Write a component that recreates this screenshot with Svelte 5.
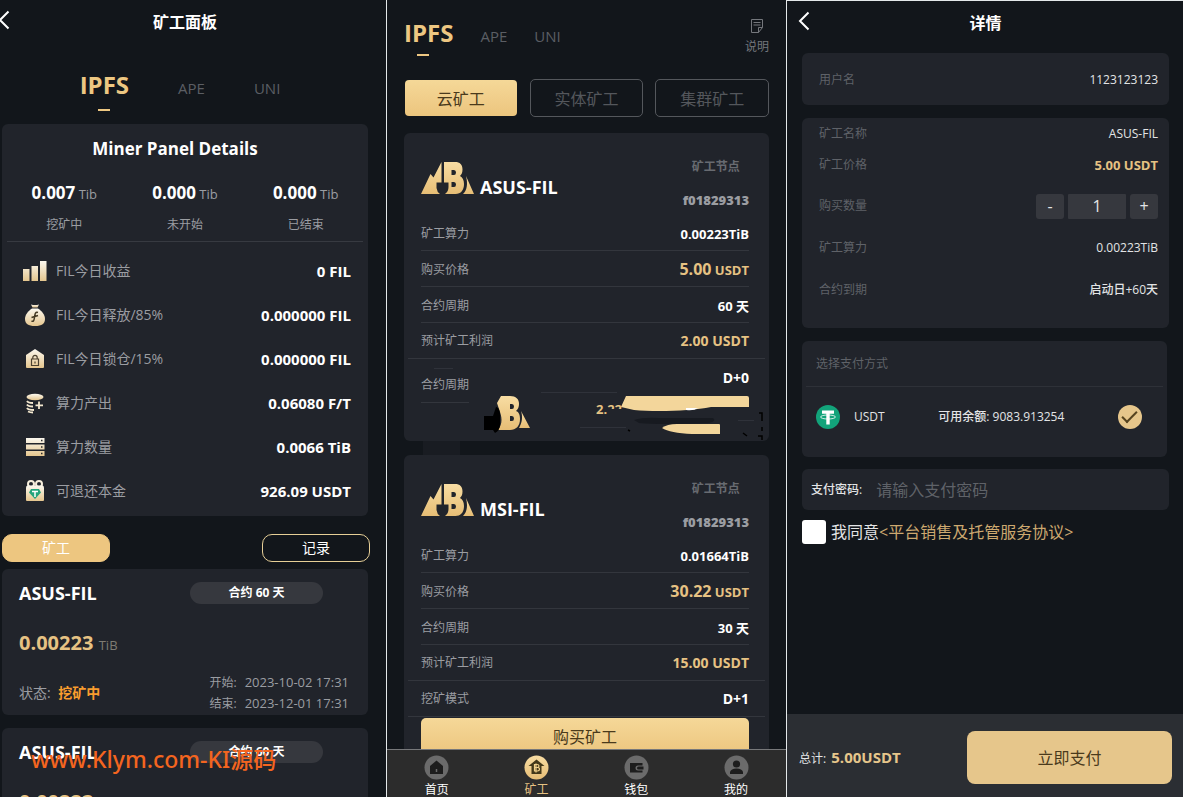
<script>
  /**
   * Miner screens side by side: dashboard, miner shop and order details.
   */

  const tabs = ['IPFS', 'APE', 'UNI'];
  let panelTab = $state('IPFS');
  let shopTab = $state('IPFS');

  const stats = [
    { value: '0.007', label: '挖矿中' },
    { value: '0.000', label: '未开始' },
    { value: '0.000', label: '已结束' },
  ];

  const details = [
    { icon: 'bars', label: 'FIL今日收益', value: '0 FIL' },
    { icon: 'bag', label: 'FIL今日释放/85%', value: '0.000000 FIL' },
    { icon: 'lock', label: 'FIL今日锁仓/15%', value: '0.000000 FIL' },
    { icon: 'coins', label: '算力产出', value: '0.06080 F/T' },
    { icon: 'server', label: '算力数量', value: '0.0066 TiB' },
    { icon: 'gift', label: '可退还本金', value: '926.09 USDT' },
  ];

  const orders = [
    { name: 'ASUS-FIL', days: 60, power: '0.00223', start: '2023-10-02 17:31', end: '2023-12-01 17:31' },
    { name: 'ASUS-FIL', days: 60, power: '0.00223', start: '2023-10-02 17:31', end: '2023-12-01 17:31' },
  ];

  const kinds = ['云矿工', '实体矿工', '集群矿工'];
  let kind = $state('云矿工');

  const miners = [
    { name: 'ASUS-FIL', power: '0.00223TiB', price: '5.00', days: 60, profit: '2.00', mode: 'D+0', sold: true },
    { name: 'MSI-FIL', power: '0.01664TiB', price: '30.22', days: 30, profit: '15.00', mode: 'D+1', sold: false },
  ];

  const nav = ['首页', '矿工', '钱包', '我的'];
  let page = $state('矿工');

  let count = $state(1);
  let password = $state('');
  let agreed = $state(false);
  let total = $derived((count * 5).toFixed(2));
</script>

{#snippet back()}
  <button class="back" type="button" aria-label="返回">
    <svg width="12" height="20" viewBox="0 0 12 20" fill="none" stroke="#fff" stroke-width="2">
      <path d="M10.500 1.500L2 10l8.500 8.500" />
    </svg>
  </button>
{/snippet}

{#snippet logo()}
  <svg class="logo" width="53" height="33" viewBox="0 0 53 33" fill="url(#gold)" aria-hidden="true">
    <path d="M0 32L9.500 12l3 3.500L20.500 0v20.500h-5V26q.5 4 3.500 6z" />
    <path fill-rule="evenodd" d="M23 0h11c5 0 7.500 2.500 7.500 7.500 0 3.500-1 5-2.500 6.500 2.500 1.500 4 4 4 8 0 6-3 10-8.500 10H24c2.500-2 3.500-4 3.500-7v-4.500H23zM30.500 8v5h2.500q2 0 2-2.500t-2-2.500zm0 12v5h2.500q2 0 2-2.500t-2-2.500z" />
    <path d="M45 14l8 18H42c4-4 5-10 3-18z" />
  </svg>
{/snippet}

{#snippet icon(name)}
  <svg class="icon" width="24" height="24" viewBox="0 0 24 24" fill="url(#cream)" aria-hidden="true">
    {#if name === 'bars'}
      <path d="M0 10h6.500v12H0zM8.500 7H15v15H8.500zM17 2h6.500v20H17z" />
    {:else if name === 'bag'}
      <path d="M8 1.500q4 1 8 0L14.500 4.500h-5z" />
      <path d="M9 5.500h6c4 2.500 7 6.500 7 10.500 0 4.500-3 7-10 7S2 20.500 2 16c0-4 3-8 7-10.500z" />
      <path d="M15 9.500c-3-1-3 2-3.500 5s-1 4.500-3 3.500M8.500 14.500l6.500-2" fill="none" stroke="#453a24" stroke-width="1.500" />
    {:else if name === 'lock'}
      <path d="M12 2l9 6v12q0 1-1 1H4q-1 0-1-1V8z" />
      <path d="M8.500 12h7v6.500h-7zM9.800 12v-1.500a2.200 2.200 0 0 1 4.400 0V12M12 14.500v2" fill="none" stroke="#4c4130" stroke-width="1.200" />
    {:else if name === 'coins'}
      <ellipse cx="12" cy="6" rx="8.500" ry="3.200" />
      <path d="M4 10q1 2 6 2M4 13.500q1 2 6 2M4 17q1 2 7 2M5 20.500q2 1 5 1M16 10.500v7.500M12.500 14.300h7.500" fill="none" stroke="#f4e8cf" stroke-width="1.800" />
    {:else if name === 'server'}
      <path d="M3 3h18.500v5H3zM3 9.500h18.500v5H3zM3 16h18.500v5H3z" />
      <path d="M18 5.500h1.500M18 12h1.500M18 18.500h1.500" stroke="#2a2a2a" stroke-width="1.500" />
    {:else}
      <circle cx="8" cy="5" r="3" fill="none" stroke="#f7efdc" stroke-width="2" />
      <circle cx="16" cy="5" r="3" fill="none" stroke="#f7efdc" stroke-width="2" />
      <path d="M5 6.500h14q2 0 2 2V21q0 1-1 1H4q-1 0-1-1V8.500q0-2 2-2z" />
      <path d="M8 10h8l2 3.500-6 6.500-6-6.500z" fill="#24a47b" />
      <path d="M9 12.500h6M12 12.500V18" stroke="#fff" stroke-width="1.500" />
    {/if}
  </svg>
{/snippet}

{#snippet navIcon(name)}
  <svg width="25" height="25" viewBox="0 0 25 25" aria-hidden="true">
    <circle cx="12.500" cy="12.500" r="12" fill={page === name ? 'url(#gold)' : '#6b6b6b'} />
    {#if name === '首页'}
      <path d="M6 11l6.500-5.500L19 11v8H6z" fill="#1d1d1d" />
      <path d="M12.500 14v3" stroke="#6b6b6b" stroke-width="1.500" />
    {:else if name === '矿工'}
      <path d="M12.500 4.500L20.500 11h-3v8h-10v-8h-3z" fill="#433819" />
      <path d="M10.500 9.500h2.500q2 0 2 1.500t-2 1.500h-2.500zM10.500 12.500h3q2 0 2 1.700t-2 1.800h-3zM12 8.500v9" fill="none" stroke="#f2d18b" stroke-width="1.200" />
    {:else if name === '钱包'}
      <path d="M6 8h12.500v2.500H14a2 2 0 0 0 0 5h4.500v2H6zM14.500 11.500h5v3h-5a1.500 1.500 0 0 1 0-3z" fill="#1d1d1d" />
    {:else}
      <circle cx="12.500" cy="9" r="3.600" fill="#1d1d1d" />
      <path d="M6 19v-2q1-3.500 6.500-3.500T19 17v2z" fill="#1d1d1d" />
    {/if}
  </svg>
{/snippet}

<svg class="defs" width="0" height="0" aria-hidden="true">
  <defs>
    <linearGradient id="gold" x1="0" y1="0" x2="0" y2="1">
      <stop offset="0" stop-color="#f8dda3" />
      <stop offset="1" stop-color="#e6bd75" />
    </linearGradient>
    <linearGradient id="cream" x1="0" y1="0" x2="0" y2="1">
      <stop offset="0" stop-color="#fbf8ef" />
      <stop offset="1" stop-color="#e5c68e" />
    </linearGradient>
  </defs>
</svg>

<div class="screens">
  <section class="screen panel">
    <header class="bar">
      {@render back()}
      <h1>矿工面板</h1>
    </header>

    <div class="tabs">
      {#each tabs as tab}
        <button type="button" class:active={panelTab === tab} onclick={() => (panelTab = tab)}>{tab}</button>
      {/each}
    </div>

    <div class="card summary">
      <h2>Miner Panel Details</h2>
      <div class="stats">
        {#each stats as stat}
          <div>
            <p class="stat"><b>{stat.value}</b> Tib</p>
            <p class="stat-label">{stat.label}</p>
          </div>
        {/each}
      </div>
      {#each details as item}
        <div class="detail">
          {@render icon(item.icon)}
          <span>{item.label}</span>
          <b>{item.value}</b>
        </div>
      {/each}
    </div>

    <div class="switch">
      <button class="filled" type="button">矿工</button>
      <button type="button">记录</button>
    </div>

    {#each orders as order}
      <article class="card order">
        <div class="order-head">
          <h3>{order.name}</h3>
          <span class="pill">合约 {order.days} 天</span>
        </div>
        <p class="power"><b>{order.power}</b> TiB</p>
        <div class="order-foot">
          <p class="status">状态: <b>挖矿中</b></p>
          <dl>
            <dt>开始:</dt>
            <dd>{order.start}</dd>
            <dt>结束:</dt>
            <dd>{order.end}</dd>
          </dl>
        </div>
      </article>
    {/each}

    <div class="watermark">www.Klym.com-KI源码</div>
  </section>

  <section class="screen shop">
    <div class="shop-list">
      <header class="shop-head">
        <div class="tabs">
          {#each tabs as tab}
            <button type="button" class:active={shopTab === tab} onclick={() => (shopTab = tab)}>{tab}</button>
          {/each}
        </div>
        <button class="help" type="button">
          <svg width="14" height="14" viewBox="0 0 14 14" fill="none" stroke="currentColor" aria-hidden="true">
            <path d="M1.500.5h11v8l-4 5h-7zM12.500 8.500h-4v5M3.500 3.500h7M3.500 6h7" />
          </svg>
          说明
        </button>
      </header>

      <div class="kinds">
        {#each kinds as item}
          <button type="button" class:active={kind === item} onclick={() => (kind = item)}>{item}</button>
        {/each}
      </div>

      {#each miners as miner}
        <article class="card miner">
          <div class="miner-head">
            {@render logo()}
            <h3>{miner.name}</h3>
            <div class="node">
              <span>矿工节点</span>
              <b>f01829313</b>
            </div>
          </div>
          <div class="line"><span>矿工算力</span><b>{miner.power}</b></div>
          <div class="line"><span>购买价格</span><b class="gold"><big>{miner.price}</big> USDT</b></div>
          <div class="line"><span>合约周期</span><b>{miner.days} 天</b></div>
          <div class="line wide"><span>预计矿工利润</span><b class="gold mid">{miner.profit} USDT</b></div>
          {#if miner.sold}
            <div class="tail">
              <span>合约周期</span>
              <b class="mid">{miner.mode}</b>
            </div>
            <!-- brushed-out footer of the sold card -->
            <svg class="brush" viewBox="0 0 365 96" aria-hidden="true">
              <path d="M19 82h37v14H19z" fill="#191c22" />
              <path d="M30 9.500h19M137 33.500h76M176 68.500h46M334 61.500h16" stroke="#2f323a" />
              <path fill="url(#gold)" fill-rule="evenodd" d="M97 37h9c6 0 9 3 9 8 0 3-1 5-3 7 3 1 4 4 4 8 0 7-4 11-10 11H94c5-7 4-13 1-21l-2-6zM106 45v5h2q2 0 2-2.500t-2-2.500zm0 12v5h2q2 0 2-2.500t-2-2.500z" />
              <path fill="url(#gold)" d="M117 52l9 17h-11c3-5 4-11 2-17z" />
              <path d="M80 57h9l3-9q3 0 4 6v12q0 5-5 8l-2-3h-9z" fill="#000" />
              <text x="192" y="55" class="brush-text">2.22</text>
              <path d="M203 50h17v8h-17z" fill="#21242b" />
              <path d="M222 37h121q2 0 2 2v9h-38c-20 4-55 5-77 3l-13-3z" fill="#f3d69b" />
              <path d="M282 49h12q-4 3-12 2z" fill="#fff" />
              <path d="M230 61q10-3 25-2h54q4 3-4 5-50 2-70 0z" fill="#171a20" />
              <path d="M258 69q5-4 15-4h42q1 0 1 1v9h-28q-22-1-30-6z" fill="#f3d69b" />
              <path d="M355 54h3v8M358 68v4M339 74l4 3M354 77h4v4M224 71l2 1" fill="none" stroke="#000" stroke-width="1.500" />
            </svg>
          {:else}
            <div class="line wide"><span>挖矿模式</span><b class="mid">{miner.mode}</b></div>
            <button class="buy" type="button">购买矿工</button>
          {/if}
        </article>
      {/each}
    </div>

    <nav>
      {#each nav as item}
        <button type="button" class:active={page === item} onclick={() => (page = item)}>
          {@render navIcon(item)}
          {item}
        </button>
      {/each}
    </nav>
  </section>

  <section class="screen checkout">
    <header class="bar">
      {@render back()}
      <h1>详情</h1>
    </header>

    <div class="card user">
      <span>用户名</span>
      <span class="value">1123123123</span>
    </div>

    <div class="card info">
      <div class="row"><span>矿工名称</span><span class="value">ASUS-FIL</span></div>
      <div class="row"><span>矿工价格</span><b class="gold">5.00 USDT</b></div>
      <div class="spaced">
        <div class="row">
          <label for="count">购买数量</label>
          <div class="stepper">
            <button type="button" aria-label="减少" onclick={() => (count = Math.max(1, count - 1))}>-</button>
            <input id="count" type="text" bind:value={count} />
            <button type="button" aria-label="增加" onclick={() => (count = Number(count) + 1)}>+</button>
          </div>
        </div>
        <div class="row"><span>矿工算力</span><span class="value">0.00223TiB</span></div>
        <div class="row"><span>合约到期</span><span class="value">启动日+60天</span></div>
      </div>
    </div>

    <div class="card pay">
      <h2>选择支付方式</h2>
      <label class="method">
        <svg width="24" height="24" viewBox="0 0 24 24" aria-hidden="true">
          <circle cx="12" cy="12" r="12" fill="#12a37a" />
          <path d="M6 5.500h12v3.200h-4.300v10.800h-3.400V8.700H6z" fill="#fff" />
          <ellipse cx="12" cy="12" rx="7.500" ry="2" fill="none" stroke="#fff" stroke-width="0.800" />
        </svg>
        <span>USDT</span>
        <span class="balance">可用余额: 9083.913254</span>
        <input type="radio" name="method" checked />
      </label>
    </div>

    <div class="card secret">
      <label for="password">支付密码:</label>
      <input id="password" type="password" placeholder="请输入支付密码" bind:value={password} />
    </div>

    <div class="agree">
      <input id="agree" type="checkbox" bind:checked={agreed} />
      <label for="agree">我同意</label><a href="#terms">&lt;平台销售及托管服务协议&gt;</a>
    </div>

    <footer>
      <p>总计: <b>{total}USDT</b></p>
      <button type="button">立即支付</button>
    </footer>
  </section>
</div>

<style>
  :global(body) {
    background: #12161b;
    color: #fff;
    font-family: 'Open Sans', 'Noto Sans CJK SC', sans-serif;
    font-size: 12px;
    line-height: 20px;
  }

  h1, h2, h3, p, dl, dd {
    margin: 0;
  }

  button, input {
    margin: 0;
    padding: 0;
    border: none;
    background: none;
    color: inherit;
    font: inherit;
  }

  button {
    cursor: pointer;
  }

  svg {
    display: block;
    flex-shrink: 0;
  }

  .defs {
    position: absolute;
  }

  .screens {
    display: grid;
    grid-template-columns: 386fr 400fr 397fr;
    height: 100vh;
    overflow: hidden;
  }

  .screen {
    position: relative;
    display: flex;
    flex-direction: column;
    min-width: 0;
    min-height: 0;
    box-sizing: border-box;
    overflow: hidden;
  }

  .screen + .screen {
    border-left: 1px solid #e4e8ea;
  }

  .card {
    flex-shrink: 0;
    background: #21242b;
    border-radius: 6px;
  }

  .gold {
    color: #e6c283;
  }

  .bar {
    position: relative;
    flex-shrink: 0;
    height: 44px;
    text-align: center;
  }

  .bar h1 {
    font-size: 16px;
    line-height: 44px;
  }

  .back {
    position: absolute;
    left: 0;
    top: 10px;
  }

  .tabs {
    display: flex;
    align-items: baseline;
    flex-shrink: 0;
  }

  .tabs button {
    display: flex;
    flex-direction: column;
    color: #5b5e64;
    font-size: 15px;
    line-height: 34px;
  }

  .tabs .active {
    color: #edc782;
    font-size: 24px;
    font-weight: 700;
  }

  .tabs .active::after {
    content: '';
    width: 12px;
    height: 2px;
    background: #edc782;
  }

  /* miner panel */
  .panel {
    padding: 0 18px 0 2px;
  }

  .panel .back {
    left: -4px;
  }

  .panel .tabs {
    justify-content: center;
    gap: 49px;
    margin-bottom: 13px;
    padding: 24px 10px 0 0;
  }

  .panel .tabs .active::after {
    margin: 7px 0 0 18px;
  }

  .summary {
    padding: 13px 0 3px;
  }

  .summary h2 {
    padding-right: 20px;
    font-size: 17px;
    line-height: 24px;
    text-align: center;
  }

  .stats {
    display: grid;
    grid-template-columns: repeat(3, 1fr);
    column-gap: 6px;
    margin: 20px 5px 7px;
    padding-bottom: 6px;
    border-bottom: 1px solid #373a41;
    color: #9b9da2;
    text-align: center;
  }

  .stat {
    height: 24px;
    margin-bottom: 10px;
    font-size: 13px;
    line-height: 24px;
  }

  .stat b {
    color: #fff;
    font-size: 17px;
  }

  .detail {
    display: flex;
    align-items: center;
    gap: 9px;
    height: 44px;
    padding: 0 17px 0 21px;
    color: #9b9da2;
    font-size: 14px;
  }

  .detail b {
    margin-left: auto;
    color: #fff;
    font-size: 15px;
  }

  .switch {
    display: flex;
    flex-shrink: 0;
    justify-content: space-between;
    margin: 18px -2px 7px 0;
  }

  .switch button {
    box-sizing: border-box;
    width: 108px;
    height: 28px;
    border: 1px solid #e6cf97;
    border-radius: 10px;
    font-size: 14px;
  }

  .switch .filled {
    border-color: #edc680;
    background: #edc680;
  }

  .order {
    margin-bottom: 13px;
    padding: 12px 19px 1px 17px;
  }

  .order-head {
    display: flex;
    align-items: center;
    justify-content: space-between;
    padding-right: 26px;
  }

  .order h3 {
    font-size: 18px;
    line-height: 24px;
  }

  .pill {
    width: 133px;
    border-radius: 11px;
    background: #36383e;
    font-weight: 700;
    line-height: 22px;
    text-align: center;
  }

  .power {
    height: 28px;
    margin: 24px 0 15px;
    color: #7e7b72;
    font-size: 13px;
    line-height: 28px;
  }

  .power b {
    margin-right: 2px;
    color: #e6c283;
    font-size: 20px;
  }

  .order-foot {
    display: flex;
    align-items: center;
    justify-content: space-between;
    color: #9b9da2;
  }

  .status {
    font-size: 14px;
  }

  .status b {
    margin-left: 4px;
    color: #f99d2e;
  }

  dl {
    display: grid;
    grid-template-columns: auto auto;
    column-gap: 8px;
    line-height: 21px;
  }

  dd {
    font-size: 13px;
  }

  .watermark {
    position: absolute;
    left: 31px;
    bottom: 24px;
    color: #f4651f;
    font-family: 'Noto Sans', 'Noto Sans CJK SC', sans-serif;
    font-size: 23px;
    font-weight: 500;
    line-height: 28px;
    white-space: nowrap;
  }

  /* shop */
  .shop-list {
    flex: 1;
    min-height: 0;
    padding: 16px 17px 0;
    overflow: hidden;
  }

  .shop-head {
    display: flex;
    align-items: flex-start;
    justify-content: space-between;
    margin-bottom: 23px;
  }

  .shop .tabs {
    gap: 27px;
  }

  .shop .tabs .active::after {
    margin: 4px 0 0 13px;
  }

  .help {
    display: flex;
    flex-direction: column;
    align-items: center;
    gap: 6px;
    padding-top: 3px;
    color: #74777c;
    line-height: 16px;
  }

  .kinds {
    display: grid;
    grid-template-columns: repeat(3, 1fr);
    gap: 12px;
    margin-bottom: 16px;
  }

  .kinds button {
    box-sizing: border-box;
    height: 38px;
    padding-top: 2px;
    border: 1px solid #54575c;
    border-radius: 5px;
    color: #54575c;
    font-size: 16px;
  }

  .kinds .active {
    border-color: transparent;
    background: linear-gradient(#f5d898, #ecc57e) padding-box;
    color: #4a3a1c;
  }

  .miner {
    position: relative;
    margin-bottom: 14px;
    padding: 24px 20px 0 17px;
  }

  .miner-head {
    display: flex;
    gap: 6px;
    margin-bottom: 5px;
  }

  .logo {
    margin-top: 5px;
  }

  .miner h3 {
    margin-top: 18px;
    font-size: 18px;
    line-height: 24px;
  }

  .node {
    display: flex;
    flex-direction: column;
    align-items: center;
    gap: 13px;
    margin-left: auto;
    color: #686b71;
    font-weight: 700;
  }

  .node b {
    color: #9b9da2;
    font-size: 13px;
  }

  .line {
    display: flex;
    align-items: center;
    justify-content: space-between;
    box-sizing: border-box;
    height: 36px;
    padding-top: 2px;
    border-bottom: 1px solid #33363d;
  }

  .line span,
  .tail span {
    color: #9b9da2;
  }

  .line b {
    font-size: 13px;
  }

  .line big {
    font-size: 16px;
  }

  .line .mid,
  .tail .mid {
    font-size: 14px;
  }

  .wide {
    margin: 0 -16px 0 -13px;
    padding: 0 16px 0 13px;
  }

  .tail {
    display: flex;
    justify-content: space-between;
    height: 73px;
    padding-top: 9px;
  }

  .tail span {
    height: 27px;
    padding-top: 7px;
    border-bottom: 1px solid #33363d;
  }

  .brush {
    position: absolute;
    left: 0;
    top: 226px;
    width: 100%;
  }

  .brush-text {
    fill: #e6c283;
    font-size: 13px;
    font-weight: 700;
  }

  .buy {
    width: 100%;
    height: 37px;
    margin-top: 1px;
    border-radius: 5px;
    background: linear-gradient(#f5d898, #ecc57e);
    color: #4a3a1c;
    font-size: 16px;
  }

  nav {
    display: grid;
    grid-template-columns: repeat(4, 1fr);
    flex-shrink: 0;
    box-sizing: border-box;
    height: 48px;
    border-top: 1px solid #77787a;
    background: #2c2c2c;
  }

  nav button {
    display: flex;
    flex-direction: column;
    align-items: center;
    gap: 1px;
    padding-top: 5px;
    line-height: 18px;
  }

  nav .active {
    color: #e6c283;
  }

  /* checkout */
  .checkout {
    padding: 0 14px 0 15px;
    border-top: 1px solid #e4e8ea;
    color: #e3e4e6;
  }

  .checkout .bar {
    margin-bottom: 8px;
    color: #fff;
  }

  .checkout .back {
    left: -4px;
  }

  .user,
  .row {
    display: flex;
    align-items: center;
    justify-content: space-between;
    padding: 0 11px 0 17px;
    color: #5f6268;
  }

  .user {
    box-sizing: border-box;
    height: 52px;
    margin-bottom: 13px;
    padding-top: 2px;
  }

  .value {
    color: #e3e4e6;
    font-weight: 500;
  }

  .info {
    margin-bottom: 13px;
    padding-bottom: 17px;
  }

  .row {
    height: 31px;
  }

  .row b {
    font-size: 13px;
  }

  .spaced {
    padding-top: 5px;
  }

  .spaced .row {
    height: 42px;
  }

  .stepper {
    display: flex;
    gap: 4px;
    color: #e3e4e6;
    font-size: 16px;
  }

  .stepper button,
  .stepper input {
    width: 28px;
    height: 25px;
    border-radius: 3px;
    background: #36383e;
    text-align: center;
  }

  .stepper input {
    width: 58px;
    border-radius: 1px;
  }

  .pay {
    margin: 0 2px 12px 0;
    padding-bottom: 10px;
  }

  .pay h2 {
    margin: 0 4px;
    padding: 0 10px;
    border-bottom: 1px solid #2e3138;
    color: #5f6268;
    font-size: 12px;
    font-weight: 400;
    line-height: 45px;
  }

  .method {
    display: flex;
    align-items: center;
    height: 60px;
    padding: 0 25px 0 14px;
    font-weight: 500;
  }

  .method span {
    margin-left: 14px;
  }

  .method .balance {
    margin: 0 auto;
  }

  .method input {
    display: grid;
    place-items: center;
    width: 24px;
    height: 24px;
    border-radius: 50%;
    background: #e6c68b;
    appearance: none;
  }

  .method input:checked::after {
    content: '';
    width: 13px;
    height: 6px;
    margin-bottom: 4px;
    border: solid #55431f;
    border-width: 0 0 2px 2px;
    transform: rotate(-45deg);
  }

  .secret {
    display: flex;
    align-items: center;
    gap: 14px;
    height: 41px;
    margin-bottom: 10px;
    padding: 0 9px;
    font-weight: 500;
  }

  .secret input {
    flex: 1;
    min-width: 0;
    font-size: 16px;
    font-weight: 400;
    outline: none;
  }

  .secret input::placeholder {
    color: #5f6268;
    opacity: 1;
  }

  .agree {
    display: flex;
    align-items: center;
    font-size: 16px;
    line-height: 24px;
  }

  .agree input {
    width: 24px;
    height: 24px;
    margin-right: 5px;
    border-radius: 3px;
    background: #fff;
    appearance: none;
  }

  .agree input:checked {
    background: #e6c68b;
  }

  .agree a {
    color: #cda970;
    text-decoration: none;
  }

  footer {
    display: flex;
    align-items: center;
    justify-content: space-between;
    flex-shrink: 0;
    box-sizing: border-box;
    height: 83px;
    margin: auto -14px 0 -15px;
    padding: 4px 11px 0 12px;
    background: #2b2e33;
  }

  footer b {
    margin-left: 2px;
    color: #e6c68b;
    font-size: 15px;
  }

  footer button {
    width: 55%;
    height: 53px;
    border-radius: 8px;
    background: #e6c68b;
    color: #4a3a1c;
    font-size: 16px;
  }
</style>
